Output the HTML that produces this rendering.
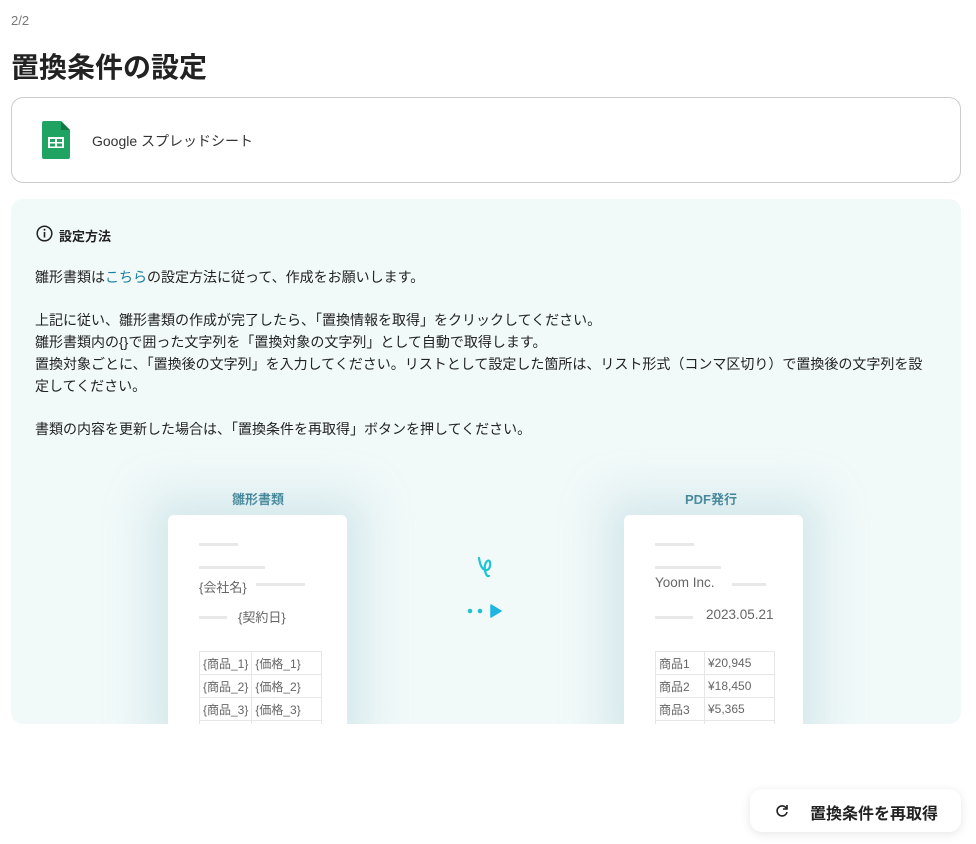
<!DOCTYPE html>
<html><head><meta charset="utf-8"><style>
*{margin:0;padding:0;box-sizing:border-box}
body{width:976px;height:844px;background:#fff;font-family:"Liberation Sans","Noto Sans CJK JP",sans-serif;color:#222;position:relative;overflow:hidden}
.a{position:absolute}
.doc{position:absolute;background:#fff;border-radius:6px;width:179px;height:220px;box-shadow:0 0 40px 20px rgba(190,220,225,.5);overflow:hidden}
.ln{position:absolute;height:3px;background:#e8e8e8}
.t{position:absolute;font-size:13px;color:#666;white-space:nowrap}
table{position:absolute;border-collapse:collapse;font-size:12px;color:#666}
td{border:1px solid #e6e6e6;height:23px;padding:0 3px;white-space:nowrap}
</style></head><body>
<div class="a" style="left:11px;top:13px;font-size:13px;color:#777">2/2</div>
<div class="a" style="left:11px;top:46px;font-size:28px;font-weight:bold;color:#222">置換条件の設定</div>
<div class="a" style="left:11px;top:97px;width:950px;height:86px;border:1px solid #ccc;border-radius:12px"></div>
<svg class="a" style="left:42px;top:121px" width="28" height="38" viewBox="0 0 28 38"><path d="M2 0h17l9 9v27a2 2 0 0 1-2 2H2a2 2 0 0 1-2-2V2a2 2 0 0 1 2-2z" fill="#1ea362"/><path d="M19 0l9 9h-9z" fill="#0f7a45"/><rect x="6" y="16" width="16" height="11" fill="#fff"/><rect x="8" y="18" width="5" height="3" fill="#1ea362"/><rect x="15" y="18" width="5" height="3" fill="#1ea362"/><rect x="8" y="22.5" width="5" height="3" fill="#1ea362"/><rect x="15" y="22.5" width="5" height="3" fill="#1ea362"/></svg>
<div class="a" style="left:92px;top:131px;font-size:14px;color:#333">Google スプレッドシート</div>
<div class="a" style="left:11px;top:199px;width:950px;height:525px;background:#f1f9f9;border-radius:12px;overflow:hidden">
<svg class="a" style="left:25px;top:26px" width="17" height="17" viewBox="0 0 17 17"><circle cx="8.5" cy="8.5" r="7.3" fill="none" stroke="#222" stroke-width="1.5"/><rect x="7.7" y="7" width="1.6" height="5.5" fill="#222"/><circle cx="8.5" cy="4.8" r="1" fill="#222"/></svg>
<div class="a" style="left:48px;top:27px;font-size:13px;font-weight:bold">設定方法</div>
<div class="a" style="left:24px;top:68px;font-size:14px;line-height:21.7px;color:#222;width:912px">雛形書類は<span style="color:#1a7fa0">こちら</span>の設定方法に従って、作成をお願いします。<br><br>上記に従い、雛形書類の作成が完了したら、「置換情報を取得」をクリックしてください。<br>雛形書類内の{}で囲った文字列を「置換対象の文字列」として自動で取得します。<br>置換対象ごとに、「置換後の文字列」を入力してください。リストとして設定した箇所は、リスト形式（コンマ区切り）で置換後の文字列を設<br>定してください。<br><br>書類の内容を更新した場合は、「置換条件を再取得」ボタンを押してください。</div>
<div class="a" style="left:221px;top:290px;font-size:13px;font-weight:bold;color:#1b6a80">雛形書類</div>
<div class="a" style="left:674px;top:290px;font-size:13px;font-weight:bold;color:#1b6a80">PDF発行</div>
<div class="doc" style="left:157px;top:316px">
<div class="ln" style="left:31px;top:28px;width:39px"></div>
<div class="ln" style="left:31px;top:51px;width:66px"></div>
<div class="t" style="left:31px;top:62px">{会社名}</div><div class="ln" style="left:88px;top:68px;width:49px"></div>
<div class="ln" style="left:31px;top:101px;width:28px"></div><div class="t" style="left:70px;top:92px">{契約日}</div>
<table style="left:31px;top:136px"><tr><td style="width:49px">{商品_1}</td><td style="width:70px">{価格_1}</td></tr><tr><td>{商品_2}</td><td>{価格_2}</td></tr><tr><td>{商品_3}</td><td>{価格_3}</td></tr><tr><td>&nbsp;</td><td></td></tr></table>
</div>
<div class="doc" style="left:613px;top:316px">
<div class="ln" style="left:31px;top:28px;width:39px"></div>
<div class="ln" style="left:31px;top:51px;width:66px"></div>
<div class="t" style="left:31px;top:60px;font-size:13.5px">Yoom Inc.</div><div class="ln" style="left:108px;top:68px;width:34px"></div>
<div class="ln" style="left:31px;top:101px;width:38px"></div><div class="t" style="left:82px;top:92px;font-size:13.5px">2023.05.21</div>
<table style="left:31px;top:136px"><tr><td style="width:49px">商品1</td><td style="width:70px">¥20,945</td></tr><tr><td>商品2</td><td>¥18,450</td></tr><tr><td>商品3</td><td>¥5,365</td></tr><tr><td>&nbsp;</td><td></td></tr></table>
</div>
<svg class="a" style="left:465px;top:356px" width="18" height="26" viewBox="0 0 18 26"><path d="M3 3c1 6 2 10 6 12 4 1 6-4 5-8-1-3-4-1-5 3-1 5 1 12 4 11" fill="none" stroke="#1ec4d4" stroke-width="2.2" stroke-linecap="round"/></svg>
<svg class="a" style="left:455px;top:404px" width="40" height="16" viewBox="0 0 40 16"><circle cx="4" cy="8" r="2.3" fill="#22c3c9"/><circle cx="14" cy="8" r="2.3" fill="#22c0d2"/><path d="M25 2l10 6-10 6z" fill="#1eb6e0" stroke="#1eb6e0" stroke-width="1.5" stroke-linejoin="round"/></svg>
</div>
<div class="a" style="left:750px;top:789px;width:211px;height:43px;background:#fff;border-radius:12px;box-shadow:0 2px 10px rgba(0,0,0,.1)"></div>
<svg class="a" style="left:774px;top:803px" width="16" height="16" viewBox="0 0 16 16"><path d="M12.5 5.5A5 5 0 1 0 13 9" fill="none" stroke="#222" stroke-width="1.6"/><path d="M13 2v4h-4" fill="none" stroke="#222" stroke-width="1.6"/></svg>
<div class="a" style="left:810px;top:800px;font-size:16px;font-weight:bold;color:#222">置換条件を再取得</div>
</body></html>
